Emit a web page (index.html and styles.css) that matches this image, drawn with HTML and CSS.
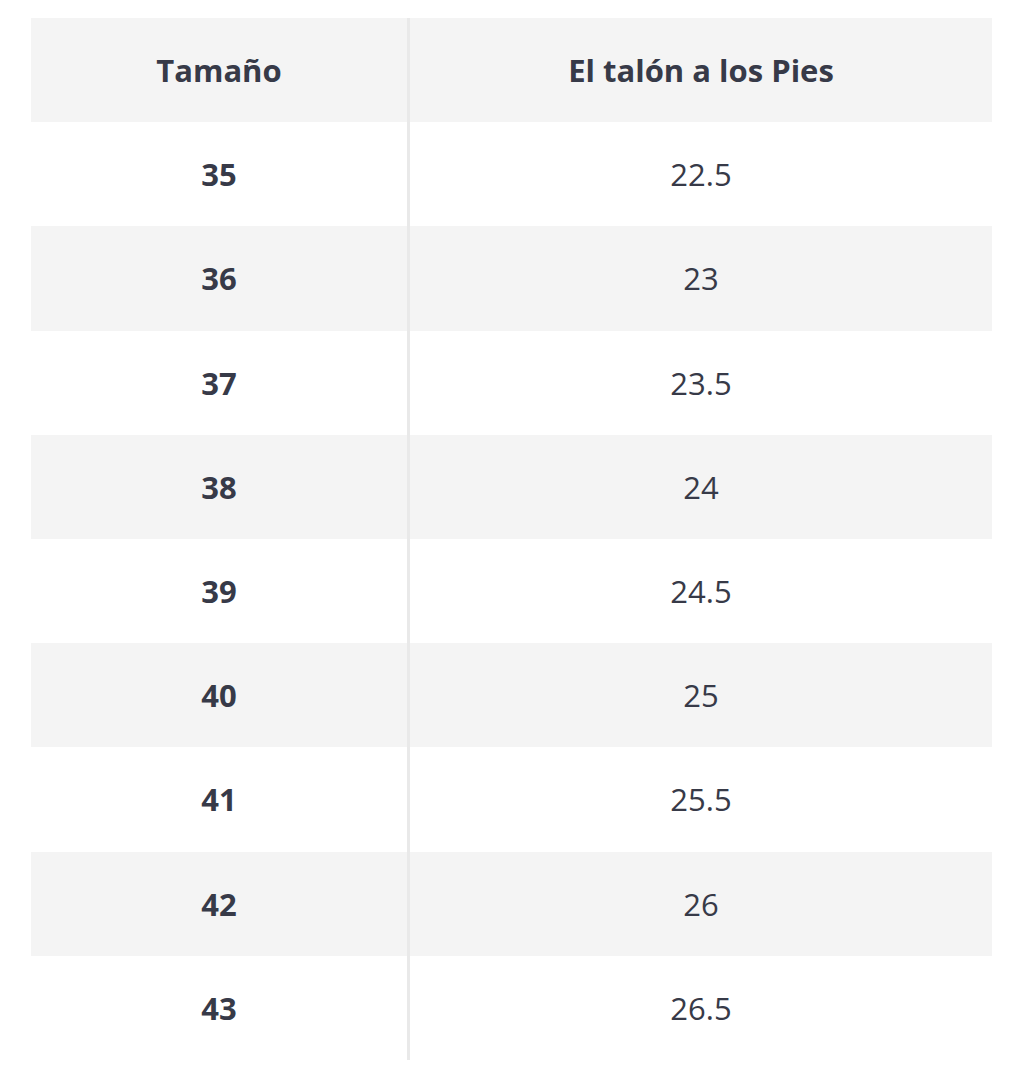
FILE: index.html
```html
<!DOCTYPE html>
<html lang="es">
<head>
<meta charset="utf-8">
<title>Tabla de tallas</title>
<link rel="stylesheet" href="styles.css">
</head>
<body>
<div class="size-table">
  <div class="row head"><div class="cell left">Tamaño</div><div class="cell right">El talón a los Pies</div></div>
  <div class="row"><div class="cell left">35</div><div class="cell right">22.5</div></div>
  <div class="row alt"><div class="cell left">36</div><div class="cell right">23</div></div>
  <div class="row"><div class="cell left">37</div><div class="cell right">23.5</div></div>
  <div class="row alt"><div class="cell left">38</div><div class="cell right">24</div></div>
  <div class="row"><div class="cell left">39</div><div class="cell right">24.5</div></div>
  <div class="row alt"><div class="cell left">40</div><div class="cell right">25</div></div>
  <div class="row"><div class="cell left">41</div><div class="cell right">25.5</div></div>
  <div class="row alt"><div class="cell left">42</div><div class="cell right">26</div></div>
  <div class="row"><div class="cell left">43</div><div class="cell right">26.5</div></div>
</div>
</body>
</html>
```
FILE: styles.css
```css
html, body {
  margin: 0;
  padding: 0;
  background: #ffffff;
}
body {
  font-family: "Open Sans", "Liberation Sans", sans-serif;
  color: #373a48;
}
.size-table {
  margin: 18px 32px 0 31px;
  display: flex;
  flex-direction: column;
}
.row {
  display: grid;
  grid-template-columns: 379px 1fr;
  height: 104.2px;
  background: #ffffff;
}
.row.head,
.row.alt {
  background: #f4f4f4;
}
.cell {
  display: flex;
  align-items: center;
  justify-content: center;
  font-size: 31px;
}
.cell.left {
  font-weight: 700;
  border-right: 3px solid #e9e9e9;
}
.cell.right {
  font-weight: 400;
}
.head .cell {
  font-weight: 700;
}
```
